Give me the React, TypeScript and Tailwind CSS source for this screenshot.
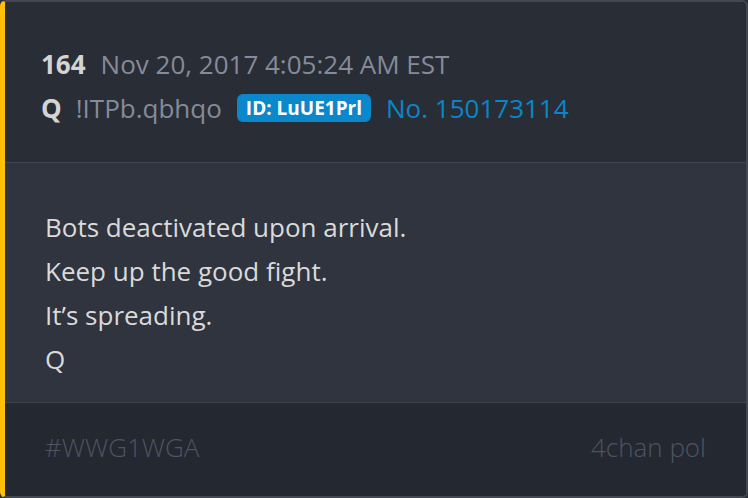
export default function App() {
  return (
    <div className="h-[498px] w-[748px] bg-[#2a2e36] font-['Open_Sans',sans-serif]">
      <div className="flex h-full flex-col overflow-hidden rounded-[6px] border-2 border-l-[5px] border-[#434853] border-l-[#ffc107]">
        {/* Header */}
        <div className="flex h-[161px] flex-col border-b border-[#3e434d] bg-[#292d36] pl-[36px] pt-[40px]">
          <div className="flex items-baseline text-[26px] leading-[44px]">
            <span className="font-bold text-[#d4d4d4]">164</span>
            <span className="ml-[15px] text-[#858b99]">Nov 20, 2017 4:05:24 AM EST</span>
          </div>
          <div className="flex items-center text-[26px] leading-[44px]">
            <span className="font-bold text-[#d4d4d4]">Q</span>
            <span className="ml-[14px] text-[#858b99]">!ITPb.qbhqo</span>
            <span className="ml-[15px] rounded-[6px] bg-[#0b88cc] px-[9px] text-[19px] font-bold leading-[28px] text-white">
              ID: LuUE1Prl
            </span>
            <span className="ml-[15px] text-[#0a86c8]">No. 150173114</span>
          </div>
        </div>

        {/* Body */}
        <div className="flex h-[240px] flex-col border-b border-[#3e434d] bg-[#2f343e] pl-[40px] pt-[42px] text-[26px] leading-[44px] text-[#dadada]">
          <p>Bots deactivated upon arrival.</p>
          <p>Keep up the good fight.</p>
          <p>It’s spreading.</p>
          <p>Q</p>
        </div>

        {/* Footer */}
        <div className="flex flex-1 items-center justify-between bg-[#242831] px-[40px] pb-[4px] text-[26px] font-light text-[#4e5461]">
          <span>#WWG1WGA</span>
          <span>4chan pol</span>
        </div>
      </div>
    </div>
  );
}
